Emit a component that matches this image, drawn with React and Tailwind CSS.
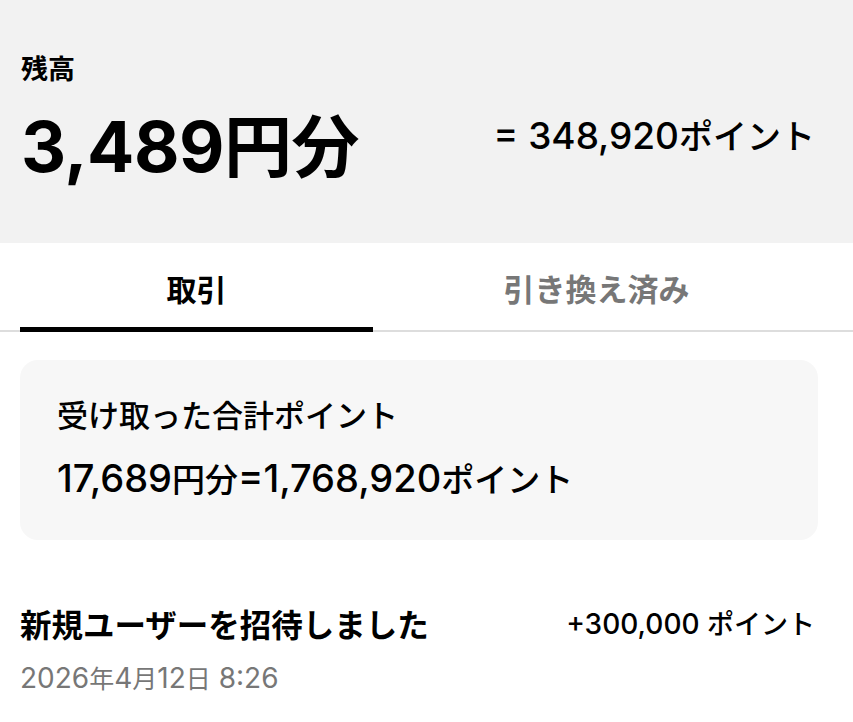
export default function App() {
  return (
    <div
      className="w-[853px] h-[722px] overflow-hidden bg-white text-black"
      style={{ fontFamily: 'Inter, "Noto Sans CJK JP", "Noto Sans", sans-serif' }}
    >
      <div className="h-[243px] bg-[#f2f2f2] pl-[21px] pr-[38px] pt-[52px]">
        <div className="text-[27px] font-semibold leading-[36px]">残高</div>
        <div className="mt-[14px] flex items-center justify-between">
          <div className="font-bold leading-[90px] tracking-[-0.5px]">
            <span className="text-[70px]">3,489</span>
            <span className="text-[68px]">円分</span>
          </div>
          <div className="font-medium leading-[50px] pb-[34px] whitespace-nowrap">
            <span className="text-[37px]">= 348,920</span>
            <span className="text-[34px]">ポイント</span>
          </div>
        </div>
      </div>
      <div className="relative border-b-2 border-[#dddddd]">
        <div className="flex pl-[20px] pr-[33px] h-[87px]">
          <div className="w-[353px] flex items-center justify-center relative">
            <span className="text-[30px] font-bold leading-[40px] pt-[6px]">取引</span>
            <div className="absolute left-0 right-0 bottom-[-2px] h-[5px] bg-black" />
          </div>
          <div className="flex-1 flex items-center justify-center">
            <span className="text-[31px] font-bold leading-[40px] text-[#777777] pt-[6px]">引き換え済み</span>
          </div>
        </div>
      </div>
      <div className="pl-[20px] pr-[35px] pt-[28px]">
        <div className="h-[180px] rounded-[18px] bg-[#f7f7f7] pl-[37px] pt-[36px]">
          <div className="text-[31px] font-medium leading-[40px]">受け取った合計ポイント</div>
          <div className="mt-[20px] font-medium leading-[44px] whitespace-nowrap">
            <span className="text-[38px]">17,689</span>
            <span className="text-[33px]">円分</span>
            <span className="text-[38px]">=1,768,920</span>
            <span className="text-[33px]">ポイント</span>
          </div>
        </div>
      </div>
      <div className="pl-[20px] pr-[38px] pt-[66px]">
        <div className="flex items-center justify-between">
          <div className="text-[31.5px] font-bold leading-[40px]">新規ユーザーを招待しました</div>
          <div className="font-medium leading-[36px] whitespace-nowrap">
            <span className="text-[28px]">+300,000 </span>
            <span className="text-[27px]">ポイント</span>
          </div>
        </div>
        <div className="mt-[15px] leading-[34px] text-[#777777]">
          <span className="text-[28px]">2026</span>
          <span className="text-[25px]">年</span>
          <span className="text-[28px]">4</span>
          <span className="text-[25px]">月</span>
          <span className="text-[28px]">12</span>
          <span className="text-[25px]">日</span>
          <span className="text-[28px]"> 8:26</span>
        </div>
      </div>
    </div>
  );
}
